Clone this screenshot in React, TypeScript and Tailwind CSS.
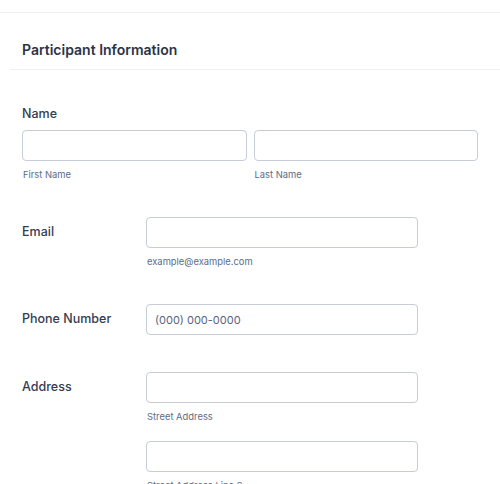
import React from "react";

const font = { fontFamily: "Inter, 'Noto Sans', sans-serif" };

function Input({ placeholder, className = "" }: { placeholder?: string; className?: string }) {
  return (
    <input
      type="text"
      placeholder={placeholder}
      className={`block h-[31px] rounded-[4px] border border-[#c8cbd8] bg-white px-[8px] text-[11px] text-[#2c3345] placeholder:text-[#57647e] outline-none ${className}`}
    />
  );
}

function Sub({ children }: { children: React.ReactNode }) {
  return <div className="mt-[7px] text-[9.4px] leading-[14px] text-[#606b85] pl-[1px]">{children}</div>;
}

export default function App() {
  return (
    <div className="w-[500px] h-[484px] overflow-hidden bg-white" style={font}>
      <div className="mt-[12px] border-t border-[#eef0f6]" />

      {/* Section header */}
      <div className="ml-[10px] h-[57px] border-b border-[#eef0f6] pt-[27px] pl-[12px]">
        <h2 className="text-[14px] leading-[20px] font-semibold text-[#2c3345]">Participant Information</h2>
      </div>

      <div className="pl-[22px] pr-[22px]">
        {/* Name */}
        <div className="mt-[34px]">
          <div className="text-[12.5px] leading-[20px] font-medium text-[#343c52]">Name</div>
          <div className="mt-[6px] flex gap-[7px]">
            <div className="w-[225px]">
              <Input className="w-full" />
              <Sub>First Name</Sub>
            </div>
            <div className="w-[225px]">
              <Input className="w-full" />
              <Sub>Last Name</Sub>
            </div>
          </div>
        </div>

        {/* Email */}
        <div className="mt-[35px] flex">
          <div className="w-[124px] h-[31px] flex items-center text-[12.5px] font-medium text-[#343c52]">Email</div>
          <div>
            <Input className="w-[272px]" />
            <Sub>example@example.com</Sub>
          </div>
        </div>

        {/* Phone */}
        <div className="mt-[35px] flex">
          <div className="w-[124px] h-[31px] flex items-center text-[12.5px] font-medium text-[#343c52]">Phone Number</div>
          <div>
            <Input className="w-[272px]" placeholder="(000) 000-0000" />
          </div>
        </div>

        {/* Address */}
        <div className="mt-[37px] flex">
          <div className="w-[124px] h-[31px] flex items-center text-[12.5px] font-medium text-[#343c52]">Address</div>
          <div>
            <Input className="w-[272px]" />
            <Sub>Street Address</Sub>
            <Input className="w-[272px] mt-[17px]" />
            <Sub>Street Address Line 2</Sub>
          </div>
        </div>
      </div>
    </div>
  );
}
